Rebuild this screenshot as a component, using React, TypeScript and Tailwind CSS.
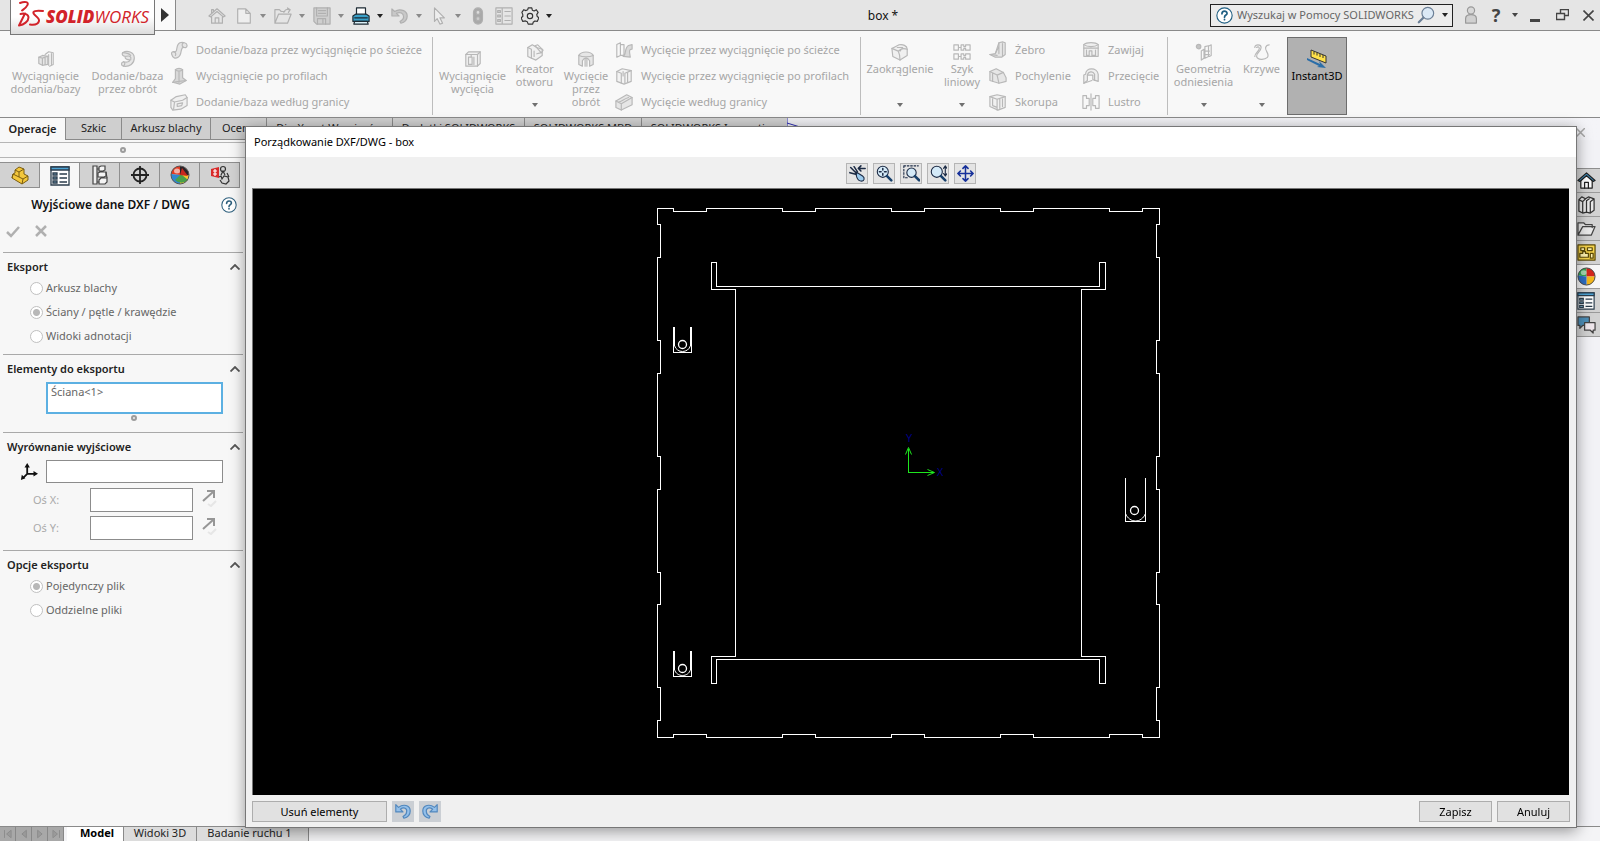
import React from "react";

type Kids = { children?: React.ReactNode };

function Icon({ size = 18, children, className = "" }: Kids & { size?: number; className?: string }) {
  return (
    <svg
      width={size}
      height={size}
      viewBox="0 0 20 20"
      fill="none"
      stroke="currentColor"
      strokeWidth="1.3"
      strokeLinejoin="round"
      strokeLinecap="round"
      aria-hidden="true"
      className={"shrink-0 " + className}
    >
      {children}
    </svg>
  );
}

function Caret({ className = "text-[#707070]" }: { className?: string }) {
  return (
    <svg width="6" height="4" viewBox="0 0 6 4" aria-hidden="true" className={"shrink-0 " + className}>
      <path d="M0 0h6L3 4z" fill="currentColor" />
    </svg>
  );
}

/* ---------- Ribbon glyphs (disabled, grey) ---------- */

const soft = "#e6e6e6";
const glyphs = {
  extrude: (
    <>
      <path d="M9 5l4-3 5 1v13l-4 2" />
      <path d="M2 8l4-2 6 1v9l-6 1-4-2z" fill={soft} />
      <path d="M2 8l4 1 6-2M6 9v8M9 9v7M13 5v12M16 4v12" />
    </>
  ),
  revolve: (
    <>
      <path d="M4 3c5-3 13-1 13 6 0 6-5 10-12 9-3-1-3-4 0-5 4 1 7 0 7-2-3 0-6-1-5-4-3 0-4-2-3-4z" fill={soft} />
      <path d="M8 7c4-1 6 0 5 4M4 3c4 0 7 1 9 3M5 13c2 1 2 3 0 5" />
    </>
  ),
  sweep: (
    <>
      <path d="M2 15c-1-2 1-4 3-3 4 1 1-8 6-10 3-1 8 0 8 3 0 2-2 3-4 2-4 0-1 8-6 11-3 2-6 1-7-3z" fill={soft} />
      <path d="M4 12c2 0 3 2 2 4M15 2c-2 1-2 4 0 5" />
    </>
  ),
  loft: (
    <>
      <path d="M6 3c2-2 6-2 8 0v9l4 3-7 4-8-2 3-4z" fill="#d8d8d8" />
      <path d="M6 3c2 2 6 2 8 0M10 5v12M3 17l7-1 8-1" />
    </>
  ),
  boundary: (
    <>
      <path d="M1 8l6-4 10-2 2 3v9l-7 4-9 1-2-3z" fill="#f0f0f0" />
      <path d="M1 8l4 2 9-2 5-3M5 10l-1 8M8 12l6-1-1 3-5 1z" />
    </>
  ),
  cut: (
    <>
      <path d="M2 5l3-3h13v13l-3 3H2z" fill="#f1f1f1" />
      <path d="M2 5h13v13M15 5l3-3M5 8v8h4V8zM11 8v8M8 5v3" />
    </>
  ),
  hole: (
    <>
      <path d="M2 5l5-3 5 3 6 2v7l-7 5-9-4z" fill="#f1f1f1" />
      <path d="M2 5l4 2v10M9 9v6M10 3l7 8 2-3-6-6zM12 12l4-1" />
    </>
  ),
  revcut: (
    <>
      <path d="M2 6c3-5 13-5 16 0v10l-4 2v-6c-2-4-6-4-8 0v6l-4-2z" fill={soft} />
      <path d="M2 6c4 2 12 2 16 0M9 9v9M11 9v9" />
    </>
  ),
  cutsweep: (
    <>
      <path d="M2 4l4-2v14l-4 2zM6 4h4v12H6" />
      <path d="M9 17c4-2 1-9 6-12l4-1v5c-4 0-3 3-2 9z" fill="#dadada" />
    </>
  ),
  cutloft: (
    <>
      <path d="M2 5l6-3 10 2v12l-8 3-8-3z" fill="#f3f3f3" />
      <path d="M2 5l5 2v11M11 7l7-3M11 7v11M9 5v5M14 6v11" />
    </>
  ),
  cutbound: (
    <>
      <path d="M1 9l12-7 6 3v8L7 19l-6-3z" fill={soft} />
      <path d="M1 9l6 3v7M7 12l12-7M4 10c4-1 5-3 11-5" />
    </>
  ),
  fillet: (
    <>
      <path d="M1 6l8-4c4-1 9 1 9 5v7l-8 5-8-4z" fill="#f0f0f0" />
      <path d="M1 6l7 3c1 2 2 4 2 10M8 9c3-3 7-3 10-2M7 5h6l-3 4" />
    </>
  ),
  pattern: (
    <>
      <path d="M1 2h5v6H1zM9 2h3v2h2V2h5v6h-5V6h-2v2H9zM1 12h5v6H1zM9 12h3v2h2v-2h5v6h-5v-2h-2v2H9zM6 5h3M6 15h3" />
    </>
  ),
  rib: (
    <>
      <path d="M11 2l4-1 3 1v13l-4 3H7l-6-3 6-1z" fill={soft} />
      <path d="M11 2v12M15 3v13M7 14l4-8M1 15l8 1" />
    </>
  ),
  draft: (
    <>
      <path d="M1 5l7-3 8 4 3 6v4l-8 2-10-3z" fill={soft} />
      <path d="M1 5l8 4 7-3M9 9l2 9M4 7v9" />
    </>
  ),
  shell: (
    <>
      <path d="M1 4l8-2 9 2v12l-8 3-9-4z" fill="#f1f1f1" />
      <path d="M1 4l8 3 9-3M9 7v12M4 6v8l5 2M12 7v10M15 6v9" />
    </>
  ),
  wrap: (
    <>
      <path d="M2 4c3-3 13-3 16 0v13H2z" fill="#efefef" />
      <path d="M2 4c4 3 12 3 16 0M5 10v6h3v-5h3v5h4v-6M2 8h16" />
    </>
  ),
  intersect: (
    <>
      <path d="M4 8c0-8 13-8 14 0v8l-6-2V9H6v6l-4 3V9z" fill="#efefef" />
      <path d="M6 9c1-4 6-5 8-1v7M2 18l9-3" />
    </>
  ),
  mirror: <path d="M1 3h4v3h3v8H5v3H1zM19 3h-4v3h-3v8h3v3h4zM10 1v18" />,
  refgeo: (
    <>
      <circle cx="4" cy="4" r="2.5" fill="#c4c4c4" />
      <path d="M7 9l3-2v10l-3 2zM11 4l4-1v12l-4 2zM16 3l2-1v12l-2 1M10 9h6M10 13h6" />
    </>
  ),
  curves: (
    <path d="M2 5c0-4 7-4 7 0 0 5-6 6-5 10 1 4 9 4 12 1 3-4-3-7-2-11 1-3 4-3 4-3M4 5c1-1 3-1 3 1 0 3-5 5-5 9" />
  ),
};
type GlyphName = keyof typeof glyphs;

function BigTool({ icon, lines, width, arrow }: { icon: GlyphName; lines: string[]; width: string; arrow?: boolean }) {
  return (
    <button
      type="button"
      className={`flex h-full shrink-0 flex-col items-center text-[#a6a6a6] ${width} ${arrow ? "pt-3" : "pt-[19px]"}`}
    >
      <Icon className="text-[#b8b8b8]">{glyphs[icon]}</Icon>
      <span className="mt-px block text-center leading-[13px]">
        {lines.map((l) => (
          <span key={l} className="block whitespace-nowrap">
            {l}
          </span>
        ))}
      </span>
      {arrow && <Caret className="mt-auto mb-[10px] text-[#707070]" />}
    </button>
  );
}

function ToolList({ items, width }: { items: [GlyphName, string][]; width: string }) {
  return (
    <div className={`flex shrink-0 flex-col pt-[6px] ${width}`}>
      {items.map(([g, t]) => (
        <button key={t} type="button" className="flex h-[26px] items-center gap-2 whitespace-nowrap text-[#a6a6a6]">
          <Icon className="text-[#b8b8b8]">{glyphs[g]}</Icon>
          {t}
        </button>
      ))}
    </div>
  );
}

const Divider = () => <div className="mt-[6px] h-[78px] w-px shrink-0 bg-[#bdbdbd]" />;

/* ---------- Top bar ---------- */

function Logo() {
  return (
    <div className="absolute top-0 left-[10px] z-10 flex h-[35px] w-[145px] items-center border border-t-0 border-[#777] bg-gradient-to-b from-white via-white to-[#dcdcdc] pl-[5px]">
      <svg width="29" height="30" viewBox="0 0 29 30" fill="none" stroke="#d2232a" strokeWidth="2" strokeLinecap="round" strokeLinejoin="round" aria-hidden="true" className="mb-1 shrink-0">
        <path d="M4 3c5-2 9-1 7.500 2C10.500 7.500 8 9 6 10.500" />
        <path d="M9 13.500L3 25.500c5-1 9.500-4 9.500-8 0-3.500-4-4.500-8-3.500" />
        <path d="M27 11c-4-.5-8-1-9.500 1-1.500 3 6.500 5 5.500 9-.8 3.500-5 4-9 3.500" />
      </svg>
      <span className="mb-[2px] ml-px font-['Open_Sans',sans-serif] text-[17px] leading-none text-[#d2232a] italic">
        <b className="font-extrabold">SOLID</b>
        <span className="font-normal">WORKS</span>
      </span>
    </div>
  );
}

function QuickButton({ label, children, className = "text-[#b0b0b0]" }: Kids & { label: string; className?: string }) {
  return (
    <button type="button" aria-label={label} className={"flex w-5 shrink-0 justify-center " + className}>
      {children}
    </button>
  );
}

function QuickMenu({ label, tone, caret = "text-[#8a8a8a]", children }: Kids & { label: string; tone?: string; caret?: string }) {
  return (
    <div className="ml-[7px] flex items-center">
      <QuickButton label={label} className={tone}>
        <Icon>{children}</Icon>
      </QuickButton>
      <Caret className={"ml-[6px] " + caret} />
    </div>
  );
}

function TopBar() {
  return (
    <header className="relative flex h-[31px] shrink-0 items-center border-b border-[#8a8a8a] bg-[#e5e5e5]">
      <Logo />
      <button type="button" aria-label="Menu" className="ml-[155px] flex h-[30px] w-[21px] shrink-0 items-center justify-center border-r border-[#8a8a8a] bg-[#fafafa]">
        <svg width="8" height="14" viewBox="0 0 8 14" aria-hidden="true">
          <path d="M0 0l8 7-8 7z" fill="#333" />
        </svg>
      </button>
      <div className="ml-[31px] flex shrink-0 items-center pt-px">
        <QuickButton label="Strona główna">
          <Icon>
            <path d="M1 10l9-8 9 8-2 1-7-6-7 6zM4 11v7h12v-7M8 18v-6h4v6M4 7V3h2v2" />
          </Icon>
        </QuickButton>
        <QuickMenu label="Nowy">
          <path d="M3 2h9l5 5v11H3zM12 2v5h5" fill="#eee" />
        </QuickMenu>
        <QuickMenu label="Otwórz">
          <path d="M1 18V3h5l2 2h4M1 18l4-10h14l-4 10zM11 6c1-3 3-4 6-3M15 1l3 2-2 3" />
        </QuickMenu>
        <QuickMenu label="Zapisz dokument">
          <path d="M1 1h18v18H4l-3-3z" fill="#cfcfcf" />
          <path d="M4 1v9h12V1M5 19v-6h9v6M6 4h8M6 7h8M11 14v4" />
        </QuickMenu>
        <QuickMenu label="Drukuj" tone="text-[#1d2a33]" caret="text-[#222]">
          <path d="M5 9V1h10v8" fill="#fff" />
          <path d="M1 10l3-2h12l3 2v6H1z" fill="#3aa0c8" />
          <path d="M3 16h14l1 3H2zM3 12h14" fill="#d9eef6" />
        </QuickMenu>
        <QuickMenu label="Cofnij">
          <path d="M1 2v8h8L6 7c4-2 8 0 8 4 0 3-2 4-4 5l1 2c4-1 7-3 7-8C18 4 10 1 4 5z" fill="#c8c8c8" />
        </QuickMenu>
        <QuickMenu label="Wybierz">
          <path d="M5 1v15l3-3 3 6 3-1-3-6h5z" fill="#eee" />
        </QuickMenu>
        <div className="ml-[7px] flex items-center gap-[6px]">
          <QuickButton label="Przebuduj">
            <Icon>
              <rect x="5" y="1" width="10" height="18" rx="5" fill="#a9a9a9" />
              <circle cx="10" cy="6" r="2.2" fill="#ddd" />
              <circle cx="10" cy="13" r="2.2" fill="#ccc" />
            </Icon>
          </QuickButton>
          <QuickButton label="Właściwości pliku">
            <Icon>
              <path d="M1 1h18v18H1zM8 1v18M3 4h3v2H3zM3 9h3v2H3zM3 14h3v2H3zM11 5h6M11 10h6M11 15h6" />
            </Icon>
          </QuickButton>
          <QuickButton label="Opcje" className="text-[#333]">
            <Icon>
              <path d="M8 1h4l.6 2.6 2 .8L17 3l2 3-1.500 2.500.5 2L20 12l-2 4-2.500-.5-2 1.500L13 19H8l-1-2.500-2-1L2 16l-2-4 2-1.500v-2L1 6l2-3 2.500 1 2-1z" />
              <circle cx="10" cy="10" r="3" />
            </Icon>
          </QuickButton>
        </div>
        <Caret className="ml-[6px] text-[#222]" />
      </div>
      <h1 className="flex-1 pt-px pl-1 text-center text-[12px] text-[#111]">box *</h1>
      <label className="flex h-[23px] w-[243px] shrink-0 items-center border border-[#222] bg-[#ececec] pl-[5px]">
        <Icon size={17} className="text-[#1f5f83]">
          <circle cx="10" cy="10" r="9" fill="#fff" />
          <path d="M7 8c0-4 6-4 6-.5 0 2-3 2-3 4.500M10 14.500v.5" strokeWidth="2" />
        </Icon>
        <input
          type="text"
          aria-label="Wyszukaj"
          placeholder="Wyszukaj w Pomocy SOLIDWORKS"
          className="ml-1 min-w-0 flex-1 bg-transparent text-[11px] outline-none placeholder:text-[#666]"
        />
        <Icon className="mr-[7px] text-[#6b7f96]">
          <circle cx="12" cy="8" r="6.500" fill="#dbe9f6" />
          <path d="M7 13l-5 5" strokeWidth="2.500" />
        </Icon>
        <Caret className="mr-1 text-[#222]" />
      </label>
      <div className="ml-2 flex shrink-0 items-center pr-[6px]">
        <QuickButton label="Logowanie" className="text-[#999]">
          <Icon>
            <circle cx="10" cy="5" r="4" fill="#d8d8d8" />
            <path d="M4 19v-5c0-6 12-6 12 0v5z" fill="#d0d0d0" />
          </Icon>
        </QuickButton>
        <button type="button" aria-label="Pomoc" className="ml-[5px] w-5 text-[18px] leading-none font-bold text-[#444]">
          ?
        </button>
        <Caret className="ml-[6px] text-[#444]" />
        <button type="button" aria-label="Minimalizuj" className="ml-3 h-[14px] w-[10px] border-b-[3px] border-[#444]" />
        <button type="button" aria-label="Przywróć" className="ml-4 text-[#444]">
          <svg width="13" height="12" viewBox="0 0 13 12" fill="none" stroke="currentColor" aria-hidden="true">
            <path d="M.5 4.500h8v6h-8zM4.500 4V.5h8v6H9" strokeWidth="1.400" />
          </svg>
        </button>
        <button type="button" aria-label="Zamknij" className="ml-[14px] text-[#444]">
          <svg width="11" height="11" viewBox="0 0 11 11" fill="none" stroke="currentColor" strokeWidth="1.600" aria-hidden="true">
            <path d="M.5.5l10 10M10.500.5l-10 10" />
          </svg>
        </button>
      </div>
    </header>
  );
}

function Ribbon() {
  return (
    <div className="flex h-[87px] shrink-0 border-b border-[#8a8a8a] bg-[#f8f8f8] text-[11px]">
      <BigTool icon="extrude" lines={["Wyciągnięcie", "dodania/bazy"]} width="w-[91px]" />
      <BigTool icon="revolve" lines={["Dodanie/baza", "przez obrót"]} width="w-[73px]" />
      <div className="w-[6px] shrink-0" />
      <ToolList
        width="w-[262px]"
        items={[
          ["sweep", "Dodanie/baza przez wyciągnięcie po ścieżce"],
          ["loft", "Wyciągnięcie po profilach"],
          ["boundary", "Dodanie/baza według granicy"],
        ]}
      />
      <Divider />
      <BigTool icon="cut" lines={["Wyciągnięcie", "wycięcia"]} width="w-[79px]" />
      <BigTool icon="hole" lines={["Kreator", "otworu"]} width="w-[45px]" arrow />
      <BigTool icon="revcut" lines={["Wycięcie", "przez", "obrót"]} width="w-[58px]" />
      <ToolList
        width="w-[245px]"
        items={[
          ["cutsweep", "Wycięcie przez wyciągnięcie po ścieżce"],
          ["cutloft", "Wycięcie przez wyciągnięcie po profilach"],
          ["cutbound", "Wycięcie według granicy"],
        ]}
      />
      <Divider />
      <BigTool icon="fillet" lines={["Zaokrąglenie"]} width="w-[78px]" arrow />
      <BigTool icon="pattern" lines={["Szyk", "liniowy"]} width="w-[46px]" arrow />
      <div className="w-1 shrink-0" />
      <ToolList
        width="w-[93px]"
        items={[
          ["rib", "Żebro"],
          ["draft", "Pochylenie"],
          ["shell", "Skorupa"],
        ]}
      />
      <ToolList
        width="w-[85px]"
        items={[
          ["wrap", "Zawijaj"],
          ["intersect", "Przecięcie"],
          ["mirror", "Lustro"],
        ]}
      />
      <Divider />
      <BigTool icon="refgeo" lines={["Geometria", "odniesienia"]} width="w-[71px]" arrow />
      <BigTool icon="curves" lines={["Krzywe"]} width="w-[45px]" arrow />
      <div className="w-[3px] shrink-0" />
      <button
        type="button"
        className="mt-[6px] flex h-[78px] w-[60px] shrink-0 flex-col items-center border border-[#6d6d6d] bg-[#b1b1b1] pt-[11px] text-black"
      >
        <svg width="22" height="20" viewBox="0 0 22 20" aria-hidden="true">
          <path d="M5 1l15 6v7L5 8z" fill="#ffe14a" stroke="#333" />
          <path d="M8 2.500v3M11 3.500v3M14 5v3M17 6v3" stroke="#333" />
          <path d="M1 9l13 6-1-3 7 7-9-1 2-1L1 11z" fill="#2b6ea8" />
        </svg>
        <span className="leading-[14px]">Instant3D</span>
      </button>
    </div>
  );
}

const commandTabs: [string, string][] = [
  ["Szkic", "w-[56px]"],
  ["Arkusz blachy", "w-[89px]"],
  ["Ocena", "w-[56px]"],
  ["DimXpert Wymiarów", "w-[126px]"],
  ["Dodatki SOLIDWORKS", "w-[132px]"],
  ["SOLIDWORKS MBD", "w-[117px]"],
  ["SOLIDWORKS Inspection", "w-[146px]"],
];

function CommandTabs() {
  return (
    <nav className="flex h-[22px] shrink-0 bg-gradient-to-r from-[#e9e9ec] to-[#f4f4f8] text-[11px] whitespace-nowrap text-[#222]">
      <button type="button" className="w-[65px] bg-[#f8f8f8] font-semibold">
        Operacje
      </button>
      {commandTabs.map(([t, w]) => (
        <button key={t} type="button" className={`overflow-hidden border-b border-l border-[#8a8a8a] bg-[#cfcfcf] ${w}`}>
          {t}
        </button>
      ))}
      <svg width="14" height="9" viewBox="0 0 14 9" fill="none" stroke="#2b2bb0" aria-hidden="true">
        <path d="M0 0v9M0 5l13 4" />
      </svg>
      <svg width="9" height="9" viewBox="0 0 9 9" fill="none" stroke="#a8a8a8" strokeWidth="1.500" aria-hidden="true" className="mt-[10px] mr-[15px] ml-auto">
        <path d="M0 0l9 9M9 0L0 9" />
      </svg>
    </nav>
  );
}

/* ---------- Property panel ---------- */

function Sphere() {
  return (
    <svg width="19" height="19" viewBox="0 0 20 20" aria-hidden="true">
      <path d="M10 10L1 9a9 9 0 0 1 9-8z" fill="#35a853" />
      <path d="M10 10V1a9 9 0 0 1 9 9z" fill="#d4261c" />
      <path d="M10 10h9a9 9 0 0 1-9 9z" fill="#f5b81c" />
      <path d="M10 10v9a9 9 0 0 1-9-10z" fill="#2f6fc4" />
      <circle cx="10" cy="10" r="9" fill="none" stroke="#444" />
      <ellipse cx="7" cy="6" rx="3" ry="2.500" fill="#fff" opacity=".55" />
    </svg>
  );
}

function SphereCut() {
  return (
    <svg width="20" height="20" viewBox="0 0 20 20" aria-hidden="true">
      <path d="M10 10L1 9a9 9 0 0 1 9-8z" fill="#e23b22" />
      <path d="M10 10V1a9 9 0 0 1 9 9z" fill="#2d2226" />
      <path d="M10 10h9a9 9 0 0 1-9 9z" fill="#f5c52c" />
      <path d="M10 10v9a9 9 0 0 1-9-10z" fill="#2f86d0" />
      <path d="M5 15l6-6 7 6a9 9 0 0 1-13 0z" fill="#49a04a" />
      <path d="M10 10l2-7 6 8z" fill="#c9281f" />
      <circle cx="10" cy="10" r="9" fill="none" stroke="#555" />
      <ellipse cx="7" cy="6" rx="3" ry="2.500" fill="#fff" opacity=".6" />
    </svg>
  );
}

function PropertySheet({ size = 20 }: { size?: number }) {
  return (
    <svg width={size} height={size} viewBox="0 0 20 20" fill="none" stroke="#2b3d4c" strokeWidth="1.300" aria-hidden="true">
      <path d="M1 1h18v18H1z" fill="#fff" />
      <path d="M1 1h18v3H1z" fill="#4da3d4" />
      <path d="M3 7h4v2H3zM3 11h4v2H3zM3 15h4v2H3z" fill="#8fc5e4" />
      <path d="M9.500 8H17M9.500 12H17M9.500 16H17" />
    </svg>
  );
}

function Triad({ size = 20 }: { size?: number }) {
  return (
    <svg width={size} height={size} viewBox="0 0 20 20" fill="none" stroke="#111" strokeWidth="2" aria-hidden="true">
      <path d="M8 3v9h9M8 12l-5 5" />
      <path d="M8 0l3 5H5zM20 12l-5 3V9zM1 19l1-6 4 4z" fill="#111" stroke="none" />
    </svg>
  );
}

const panelTabs: [string, React.ReactNode][] = [
  [
    "Drzewo operacji",
    <svg key="a" width="20" height="20" viewBox="0 0 20 20" stroke="#7a5c10" aria-hidden="true">
      <path d="M5 5l4-3 5 2v5l4 2v4l-6 4-10-6 1-4 2-1z" fill="#f3c73c" />
      <path d="M5 5l4 2 5-3M9 7v5l4 2 5-3M13 14l-1 5M2 13l1-4 6 3" fill="none" />
    </svg>,
  ],
  ["Właściwości", <PropertySheet key="b" />],
  [
    "Konfiguracje",
    <svg key="c" width="20" height="20" viewBox="0 0 20 20" fill="none" stroke="#444" strokeWidth="1.200" aria-hidden="true">
      <path d="M3 1h4v18H3zM7 4h2M7 17h2" fill="#eee" />
      <path d="M9 2l2-1h4v4l-2 1H9zM8 8l2-1h6v4l-2 1H8zM9 15l2-2h6v4l-2 2H9z" fill="#f4f4f4" />
      <path d="M16 7l1 6" />
    </svg>,
  ],
  [
    "Wymiary",
    <svg key="d" width="20" height="20" viewBox="0 0 20 20" fill="none" stroke="#222" strokeWidth="1.800" aria-hidden="true">
      <circle cx="10" cy="10" r="6.500" />
      <path d="M10 1v18M1 10h18" />
    </svg>,
  ],
  ["Wygląd", <SphereCut key="e" />],
  [
    "CAM",
    <svg key="f" width="20" height="20" viewBox="0 0 20 20" fill="none" stroke="#333" strokeWidth="1.200" aria-hidden="true">
      <path d="M1 4l8-2v11l-8-2z" fill="#d92a2a" stroke="none" />
      <path d="M3 6h4M3 9h4M5 4v7" stroke="#fff" />
      <circle cx="13" cy="4" r="2.500" />
      <path d="M11 10l2-4 2 4M17 8l2 4M9 12l2-1 1 3 2-3 4 1 1 4-3 3-4-1-2-3" />
    </svg>,
  ],
];

function HelpBadge() {
  return (
    <Icon size={16} className="text-[#2d5f7d]">
      <circle cx="10" cy="10" r="9" fill="#fff" />
      <path d="M7 8c0-4 6-4 6-.5 0 2-3 2-3 4.500M10 14.500v.5" strokeWidth="2" />
    </Icon>
  );
}

function Section({ title, className, children }: Kids & { title: string; className: string }) {
  return (
    <section className={"mr-[3px] ml-[3px] shrink-0 border-t border-[#a9a9a9] " + className}>
      <button type="button" className="flex h-[27px] w-full items-center justify-between pt-px pr-[3px] pl-1 text-[11px] font-semibold text-[#222]">
        {title}
        <svg width="10" height="6" viewBox="0 0 10 6" fill="none" stroke="#555" strokeWidth="1.800" aria-hidden="true" className="mb-px">
          <path d="M.5 5.500L5 1l4.500 4.500" />
        </svg>
      </button>
      {children}
    </section>
  );
}

function Radio({ name, label, checked }: { name: string; label: string; checked?: boolean }) {
  return (
    <label className="flex h-6 items-center gap-[3px] pl-[27px] text-[11px] text-[#666]">
      <input
        type="radio"
        name={name}
        defaultChecked={checked}
        className="h-[13px] w-[13px] appearance-none rounded-full border border-[#c0c0c0] bg-white checked:bg-[radial-gradient(circle,#b8b8b8_3px,transparent_4px)]"
      />
      {label}
    </label>
  );
}

const Knob = () => <span className="block h-[6px] w-[6px] rounded-full border-2 border-[#9c9c9c] bg-[#eee]" />;

function AxisRow({ id, label }: { id: string; label: string }) {
  return (
    <div className="mt-1 flex h-6 items-center">
      <label htmlFor={id} className="w-[87px] pl-[30px] text-[11px] text-[#aaa]">
        {label}
      </label>
      <input id={id} type="text" className="h-6 w-[103px] border border-[#8c8c8c] bg-white px-1 text-[11px]" />
      <svg width="16" height="18" viewBox="0 0 16 18" fill="none" stroke="#969696" strokeWidth="2" aria-hidden="true" className="mb-1 ml-[9px]">
        <path d="M1 12L11 3M5 2h7v7" />
        <path d="M6 15l3 2 5-5" stroke="#e6e6e6" />
      </svg>
    </div>
  );
}

function PropertyPanel() {
  return (
    <aside className="flex w-[246px] shrink-0 flex-col bg-[#f7f7f7]">
      <div className="mt-[2px] flex h-4 shrink-0 items-center justify-center border-t border-b border-[#b5b5b5]">
        <Knob />
      </div>
      <div className="mt-1 flex h-[26px] shrink-0">
        {panelTabs.map(([name, icon], i) => (
          <button
            key={name}
            type="button"
            aria-label={name}
            className={`flex w-10 items-center justify-center border-t border-r border-[#8f8f8f] ${i === 1 ? "bg-[#f7f7f7]" : "border-b bg-[#d2d2d2]"}`}
          >
            {icon}
          </button>
        ))}
      </div>
      <div className="flex h-[34px] shrink-0 items-center pr-[9px]">
        <h2 className="flex-1 text-center text-[12px] font-semibold text-[#111]">Wyjściowe dane DXF / DWG</h2>
        <HelpBadge />
      </div>
      <div className="flex h-[30px] shrink-0 items-start gap-[15px] pt-[3px] pl-[6px] text-[#b0b0b0]">
        <button type="button" aria-label="OK">
          <svg width="14" height="13" viewBox="0 0 14 13" fill="none" stroke="currentColor" strokeWidth="2.500" aria-hidden="true">
            <path d="M1 7l4 4 8-9" />
          </svg>
        </button>
        <button type="button" aria-label="Anuluj operację">
          <svg width="12" height="12" viewBox="0 0 12 12" fill="none" stroke="currentColor" strokeWidth="2.500" aria-hidden="true">
            <path d="M1 1l10 10M11 1L1 11" />
          </svg>
        </button>
      </div>
      <Section title="Eksport" className="h-[102px]">
        <div className="-mt-1">
          <Radio name="eksport" label="Arkusz blachy" />
          <Radio name="eksport" label="Ściany / pętle / krawędzie" checked />
          <Radio name="eksport" label="Widoki adnotacji" />
        </div>
      </Section>
      <Section title="Elementy do eksportu" className="h-[78px]">
        <textarea
          aria-label="Elementy do eksportu"
          defaultValue="Ściana<1>"
          className="ml-[43px] block h-8 w-[177px] resize-none border-2 border-[#5cb0e2] bg-white px-[3px] text-[11px] leading-[15px] text-[#666] outline-none"
        />
        <div className="ml-[128px] pt-px">
          <Knob />
        </div>
      </Section>
      <Section title="Wyrównanie wyjściowe" className="h-[118px]">
        <div className="flex h-6 items-start">
          <span className="ml-[17px] w-[26px] pt-[3px]">
            <Triad size={18} />
          </span>
          <input type="text" aria-label="Początek układu" className="h-[23px] w-[177px] border border-[#8c8c8c] bg-white px-1 text-[11px]" />
        </div>
        <AxisRow id="axis-x" label="Oś X:" />
        <AxisRow id="axis-y" label="Oś Y:" />
      </Section>
      <Section title="Opcje eksportu" className="">
        <div className="-mt-1">
          <Radio name="pliki" label="Pojedynczy plik" checked />
          <Radio name="pliki" label="Oddzielne pliki" />
        </div>
      </Section>
    </aside>
  );
}

/* ---------- Task pane on the right ---------- */

const taskIcons: [string, React.ReactNode][] = [
  [
    "Zasoby",
    <Icon key="1" size={19} className="text-[#222]">
      <path d="M4 10v8h12v-8L10 4z" fill="#fff" />
      <path d="M1 10l9-8 9 8-2 1-7-6-7 6z" fill="#3d8fbf" />
      <path d="M8 18v-6h4v6" />
    </Icon>,
  ],
  [
    "Biblioteka projektu",
    <Icon key="2" size={19} className="text-[#333]">
      <path d="M2 5l3-3 4 2 3-2 6 2v12l-4 3-4-1-4 1-4-2zM2 5l4 2v11M6 7l3-3M10 6v12M10 6l3-2M14 7v11M14 7l4-3" fill="#e9e9e9" />
    </Icon>,
  ],
  [
    "Eksplorator plików",
    <Icon key="3" size={19} className="text-[#444]">
      <path d="M1 17V4h6l2 2h7v3M1 17l5-9h13l-4 9z" fill="#eaeaea" />
    </Icon>,
  ],
  [
    "Paleta widoków",
    <Icon key="4" size={19} className="text-[#5b4a08]">
      <path d="M1 2h18v16H1z" fill="#f6d44c" />
      <path d="M4 5h4v3H4zM11 5h5v3h-5zM3 15v-4h3V9h3v2h3v4zM14 11h3v5h-3z" fill="#fff3b0" />
    </Icon>,
  ],
  ["Wyglądy i sceny", <Sphere key="5" />],
  ["Właściwości niestandardowe", <PropertySheet key="6" size={18} />],
  [
    "Forum",
    <Icon key="7" size={19} className="text-[#444]">
      <path d="M1 2h12v9H6l-3 3v-3H1z" fill="#4d8fb8" />
      <path d="M8 8h11v8h-2v3l-3-3H8z" fill="#efe7ec" />
    </Icon>,
  ],
];

function TaskPane() {
  return (
    <aside className="mt-7 flex w-[23px] shrink-0 flex-col border-t border-[#8f8f8f]">
      {taskIcons.map(([name, icon], i) => (
        <button
          key={name}
          type="button"
          aria-label={name}
          className={`flex h-6 shrink-0 items-center justify-start border-b border-[#9a9a9a] ${i === 4 ? "bg-[#f7f7f7]" : "bg-[#d2d2d2]"}`}
        >
          {icon}
        </button>
      ))}
    </aside>
  );
}

/* ---------- Dialog ---------- */

function OutlineDrawing() {
  const xs = [673, 706, 782, 815, 891, 924, 1000, 1033, 1109, 1142];
  const ys = [224, 257, 340, 373, 456, 489, 572, 604, 687, 720];
  const L = 657;
  const R = 1159;
  const T = 208;
  const B = 737;
  let d = `M${L} ${T}`;
  xs.forEach((x, i) => (d += `H${x}V${i % 2 ? T : T + 3}`));
  d += `H${R}`;
  ys.forEach((y, i) => (d += `V${y}H${i % 2 ? R : R - 3}`));
  d += `V${B}`;
  [...xs].reverse().forEach((x, i) => (d += `H${x}V${i % 2 ? B : B - 3}`));
  d += `H${L}`;
  [...ys].reverse().forEach((y, i) => (d += `V${y}H${i % 2 ? L : L + 3}`));
  d += "Z";
  const clip = (dy: number) => (
    <g transform={`translate(0 ${dy})`}>
      <path d="M673 326v26h18v-26M674 326v19M690 326v19" />
      <path d="M674 345c2 8 14 8 16 0" shapeRendering="auto" />
      <circle cx="682" cy="344" r="4" strokeWidth="1.300" shapeRendering="auto" />
    </g>
  );
  return (
    <svg
      viewBox="253 189 1316 606"
      className="block h-full w-full"
      role="img"
      aria-label="Podgląd konturu"
      fill="none"
      stroke="#fff"
      strokeWidth="1"
      shapeRendering="crispEdges"
    >
      <g transform="translate(.5 .5)">
        <path d={d} />
        <path d="M711 262h5v24h383v-24h6v27h-24v367h24v27h-6v-24H716v24h-5v-27h24V289h-24z" />
        {clip(0)}
        {clip(324)}
        <path d="M1125 477v44h20v-44" />
        <path d="M1125 513c4 10 16 10 20 0" shapeRendering="auto" />
        <circle cx="1134" cy="510" r="4" strokeWidth="1.300" shapeRendering="auto" />
        <g stroke="#1ee61e">
          <path d="M908 448v24h25" />
          <path d="M905 454l3-7 3 7M927 469l7 3-7 3" shapeRendering="auto" />
        </g>
      </g>
      <g fill="#00008b" stroke="none" fontSize="10" textAnchor="middle" fontFamily="Liberation Sans, sans-serif">
        <text x="909" y="442">Y</text>
        <text x="940" y="476">X</text>
      </g>
    </svg>
  );
}

const lens = (
  <>
    <circle cx="8" cy="8" r="6.500" fill="#d4eaf8" />
    <path d="M13 13l5 5" stroke="#17406b" strokeWidth="3" />
  </>
);

const viewTools: [string, React.ReactNode][] = [
  [
    "Poprzedni widok",
    <>
      <path d="M8 8l8 5c3 2 2 6-1 6-3 0-5-2-6-5z" fill="#9ccbee" />
      <path d="M2 3l7 7M1 9l7 2M6 2l4 6" strokeWidth="1.800" />
      <path d="M19 4h-7M14 1l-3 3 3 3" strokeWidth="1.800" />
    </>,
  ],
  [
    "Powiększ, aby dopasować",
    <>
      {lens}
      <path d="M8 4v2M8 10v2M4 8h2M10 8h2" strokeWidth="1.800" />
    </>,
  ],
  [
    "Powiększ obszar",
    <>
      <path d="M1 1h17M1 1v14h5" strokeDasharray="2 2" />
      <circle cx="10" cy="9" r="5.500" fill="#d4eaf8" />
      <path d="M14 13l5 5" stroke="#17406b" strokeWidth="3" />
    </>,
  ],
  [
    "Powiększ/pomniejsz",
    <>
      {lens}
      <path d="M18 2v10M16 4l2-3 2 3M16 10l2 3 2-3" />
    </>,
  ],
  [
    "Przesuń",
    <path d="M10 1v18M1 10h18M7 4l3-3 3 3M7 16l3 3 3-3M4 7l-3 3 3 3M16 7l3 3-3 3" stroke="#16309a" strokeWidth="1.800" />,
  ],
];

const pushButton = "h-[21px] border border-[#adadad] bg-[#e1e1e1] text-[11px] leading-none text-black";

function ExportDialog() {
  return (
    <div
      role="dialog"
      aria-labelledby="dialog-title"
      className="fixed top-[126px] right-[23px] bottom-[13px] left-[245px] z-20 flex flex-col border border-[#777] bg-[#f0f0f0] shadow-[0_3px_14px_rgba(0,0,0,0.4)]"
    >
      <h2 id="dialog-title" className="flex h-[30px] shrink-0 items-center bg-white pl-2 text-[11px] text-black">
        Porządkowanie DXF/DWG - box
      </h2>
      <div className="flex h-[31px] shrink-0 items-center justify-center gap-[5px] pt-[2px]">
        {viewTools.map(([name, icon]) => (
          <button
            key={name}
            type="button"
            aria-label={name}
            className="flex h-[21px] w-[22px] items-center justify-center border border-[#b5b5b5] bg-[#e4e4e4] text-[#1c2b45]"
          >
            <Icon size={17}>{icon}</Icon>
          </button>
        ))}
      </div>
      <div className="mr-[7px] ml-[6px] min-h-0 flex-1 border-t border-l border-[#777] bg-black">
        <OutlineDrawing />
      </div>
      <div className="flex h-8 shrink-0 items-center gap-[5px] px-[6px]">
        <button type="button" className={pushButton + " w-[135px]"}>
          Usuń elementy
        </button>
        <button type="button" aria-label="Cofnij usunięcie" className="flex h-[21px] w-[22px] items-center justify-center bg-[#cbcfd4] text-[#5187bd]">
          <Icon>
            <path d="M2 3v8h8L7 8c4-3 8-1 7 3 0 2-2 4-4 5l1 2c4-1 7-4 7-8 0-7-8-8-13-4z" fill="#94c0ea" />
          </Icon>
        </button>
        <button type="button" aria-label="Ponów usunięcie" className="flex h-[21px] w-[22px] items-center justify-center bg-[#cbcfd4] text-[#5187bd]">
          <Icon>
            <path d="M18 3v8h-8l3-3C9 5 5 7 6 11c0 2 2 4 4 5l-1 2c-4-1-7-4-7-8 0-7 8-8 13-4z" fill="#94c0ea" />
          </Icon>
        </button>
        <button type="button" className={pushButton + " ml-auto w-[73px]"}>
          Zapisz
        </button>
        <button type="button" className={pushButton + " w-[73px]"}>
          Anuluj
        </button>
      </div>
    </div>
  );
}

/* ---------- Bottom tabs ---------- */

const navPaths = ["M5 5v10M14 5l-6 5 6 5z", "M13 5l-6 5 6 5z", "M7 5l6 5-6 5z", "M6 5l6 5-6 5zM15 5v10"];
const navNames = ["Pierwsza karta", "Poprzednia karta", "Następna karta", "Ostatnia karta"];

function BottomTabs() {
  return (
    <nav className="flex h-[15px] shrink-0 border-t border-[#8a8a8a] bg-[#f4f4f6] text-[11px] leading-[12px] whitespace-nowrap text-[#222]">
      {navPaths.map((p, i) => (
        <button key={p} type="button" aria-label={navNames[i]} className="flex w-4 items-center justify-center border-r border-[#888] bg-[#a8a8a8] text-[#8a8a8a]">
          <Icon size={14}>
            <path d={p} fill="#9a9a9a" />
          </Icon>
        </button>
      ))}
      <button type="button" className="ml-[3px] w-[56px] bg-white pb-[2px] pl-1 font-bold text-black">
        Model
      </button>
      <button type="button" className="w-[74px] border-r border-l border-[#8a8a8a] bg-[#dcdcdc] pb-[2px]">
        Widoki 3D
      </button>
      <button type="button" className="w-[112px] border-r border-[#8a8a8a] bg-[#dcdcdc] pr-[6px] pb-[2px]">
        Badanie ruchu 1
      </button>
    </nav>
  );
}

export default function App() {
  return (
    <div className="flex h-screen flex-col overflow-hidden bg-[#f2f2f6] font-['Noto_Sans','Open_Sans',sans-serif]">
      <TopBar />
      <Ribbon />
      <CommandTabs />
      <main className="flex min-h-0 flex-1">
        <PropertyPanel />
        <div className="flex-1" />
        <TaskPane />
      </main>
      <BottomTabs />
      <ExportDialog />
    </div>
  );
}
